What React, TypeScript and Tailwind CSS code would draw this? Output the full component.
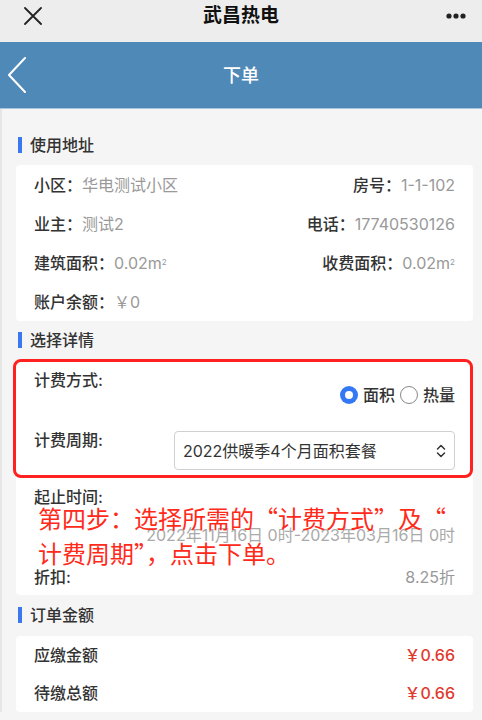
import React from "react";

const cjk = { fontFamily: 'Inter, "Noto Sans CJK SC", "Noto Sans", sans-serif' };

function SectionHeader({ title }: { title: string }) {
  return (
    <div className="flex items-center h-[22px]">
      <div className="w-[4px] h-[16px] bg-[#3b78f0] ml-[2px] mr-[8px]" />
      <span className="text-[16px] text-[#333] font-medium">{title}</span>
    </div>
  );
}

function Row({ l1, v1, l2, v2 }: { l1: string; v1: React.ReactNode; l2?: string; v2?: React.ReactNode }) {
  return (
    <div className="flex items-center justify-between h-[39px] px-[18px] text-[16px]">
      <div>
        <span className="text-[#333] font-medium">{l1}：</span>
        <span className="text-[#999]">{v1}</span>
      </div>
      {l2 && (
        <div>
          <span className="text-[#333] font-medium">{l2}：</span>
          <span className="text-[#999]">{v2}</span>
        </div>
      )}
    </div>
  );
}

export default function App() {
  return (
    <div className="w-[482px] h-[720px] overflow-hidden bg-[#f5f5f5]" style={cjk}>
      {/* WeChat top bar */}
      <div className="relative h-[42px] bg-[#ededed] flex items-center justify-center">
        <svg className="absolute left-[24px] top-[7px]" width="18" height="18" viewBox="0 0 18 18">
          <path d="M1 1 L17 17 M17 1 L1 17" stroke="#222" strokeWidth="1.8" strokeLinecap="round" />
        </svg>
        <span className="text-[19px] font-bold text-[#111] -mt-[10px]">武昌热电</span>
        <svg className="absolute left-[445px] top-[12px]" width="22" height="8" viewBox="0 0 22 8">
          <circle cx="4" cy="4" r="2.6" fill="#222" />
          <circle cx="11" cy="4" r="2.6" fill="#222" />
          <circle cx="18" cy="4" r="2.6" fill="#222" />
        </svg>
      </div>
      {/* Blue header */}
      <div className="relative h-[67px] bg-[#4f89b7] flex items-center justify-center border-b border-[#a9c4dc]">
        <svg className="absolute left-[6px] top-[15px]" width="22" height="36" viewBox="0 0 22 36">
          <path d="M19 1 L3 18 L19 35" stroke="#fff" strokeWidth="2" fill="none" strokeLinecap="round" strokeLinejoin="round" />
        </svg>
        <span className="text-[18px] text-white font-medium">下单</span>
      </div>

      <div className="pl-[14px] pr-[9px] border-l-2 border-[#e6e6e6]">
        <div className="pt-[25px] pb-[9px]">
          <SectionHeader title="使用地址" />
        </div>
        <div className="bg-white rounded-[4px]">
          <Row l1="小区" v1="华电测试小区" l2="房号" v2="1-1-102" />
          <Row l1="业主" v1="测试2" l2="电话" v2="17740530126" />
          <Row
            l1="建筑面积"
            v1={<>0.02m<sup className="text-[8px]">2</sup></>}
            l2="收费面积"
            v2={<>0.02m<sup className="text-[8px]">2</sup></>}
          />
          <Row l1="账户余额" v1="￥0" />
        </div>

        <div className="pt-[8px] pb-[8px]">
          <SectionHeader title="选择详情" />
        </div>

        <div className="relative bg-white rounded-[4px] text-[16px]">
          <div className="flex justify-between px-[18px] pt-[9px] h-[60px]">
            <span className="text-[#333] font-medium leading-[24px]">计费方式:</span>
            <div className="flex items-center self-start mt-[15px]">
              <span className="w-[18px] h-[18px] rounded-full bg-[#3478f6] flex items-center justify-center">
                <span className="w-[8px] h-[8px] rounded-full bg-white" />
              </span>
              <span className="ml-[5px] text-[#333] font-medium">面积</span>
              <span className="ml-[5px] w-[18px] h-[18px] rounded-full border border-[#888] bg-white" />
              <span className="ml-[5px] text-[#333] font-medium">热量</span>
            </div>
          </div>
          <div className="flex items-start justify-between px-[18px] h-[59px]">
            <span className="text-[#333] font-medium leading-[24px] mt-[9px]">计费周期:</span>
            <div className="w-[281px] h-[39px] mt-[12px] border border-[#d0d0d0] rounded-[4px] flex items-center justify-between pl-[8px] pr-[8px]">
              <span className="text-[#333] text-[16px]">2022供暖季4个月面积套餐</span>
              <svg width="10" height="14" viewBox="0 0 10 14">
                <path d="M1.5 5 L5 1.5 L8.5 5 M1.5 9 L5 12.5 L8.5 9" stroke="#333" strokeWidth="1.5" fill="none" strokeLinecap="round" strokeLinejoin="round" />
              </svg>
            </div>
          </div>
          <div className="pointer-events-none absolute left-[-3px] right-[0px] top-[0px] h-[119px] border-[3px] border-[#ff2020] rounded-[8px]" />
          <div className="px-[18px] pt-[7px] leading-[24px] text-[#333] font-medium">起止时间:</div>
          <div className="px-[18px] pt-[14px] text-right text-[16px] leading-[24px] text-[#aaa]">
            2022年11月16日 0时-2023年03月16日 0时
          </div>
          <div className="flex justify-between px-[18px] pt-[18px] pb-[6px] leading-[24px]">
            <span className="text-[#333] font-medium">折扣:</span>
            <span className="text-[#999]">8.25折</span>
          </div>
          <div className="absolute left-[22px] top-[141px] text-[24px] leading-[35px] text-[#ff2a1a] whitespace-nowrap" style={{ fontFamily: '"Noto Sans CJK SC", sans-serif' }}>
            <div>第四步：选择所需的“计费方式”及“</div>
            <div>计费周期”，点击下单。</div>
          </div>
        </div>

        <div className="pt-[9px] pb-[10px]">
          <SectionHeader title="订单金额" />
        </div>
        <div className="bg-white rounded-[4px] text-[16px]">
          <div className="flex items-center justify-between h-[38px] px-[18px]">
            <span className="text-[#333] font-medium">应缴金额</span>
            <span className="text-[#e03a2f] font-medium">￥0.66</span>
          </div>
          <div className="flex items-center justify-between h-[38px] px-[18px]">
            <span className="text-[#333] font-medium">待缴总额</span>
            <span className="text-[#e03a2f] font-medium">￥0.66</span>
          </div>
        </div>
      </div>
    </div>
  );
}
